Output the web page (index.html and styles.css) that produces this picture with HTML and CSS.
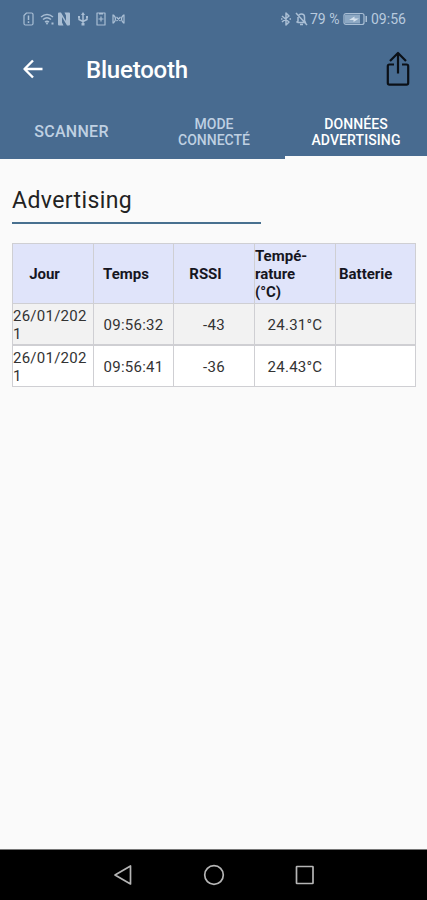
FILE: index.html
```
<!DOCTYPE html>
<html lang="fr">

<head>
    <meta charset="UTF-8" />
    <meta name="viewport" content="width=device-width, initial-scale=1.0">
    <title>Bluetooth</title>
    <link rel="stylesheet" href="styles.css">
</head>

<body>
    <header class="header">
        <div class="status">
            <div class="status-left">
                <svg width="11" height="14" viewBox="0 0 11 14"><path d="M3.500 1H8.500Q10 1 10 2.500V11.500Q10 13 8.500 13H2.500Q1 13 1 11.500V3.500Z" /><path class="medium" d="M5.500 3.500V8M5.500 9.300V11" /></svg>
                <svg width="14" height="14" viewBox="0 0 14 14"><path class="medium" d="M1 5Q7 0 13 5M3 7.500Q7 4 11 7.500M5 10Q7 8.500 9 10" /><path class="solid" d="M5.500 10.500H8.500L7 13ZM11.500 10.500H13.500V12.500H11.500Z" /></svg>
                <svg width="14" height="14" viewBox="0 0 14 14"><path class="solid" d="M1 1.500Q1 0.500 2 0.500H4L9 9V3.500L7.500 0.500H12Q13 0.500 13 1.500V12.500Q13 13.500 12 13.500H10L5 5V10.500L6.500 13.500H2Q1 13.500 1 12.500Z" /></svg>
                <svg width="12" height="14" viewBox="0 0 12 14"><path class="medium" d="M6 2V12M2 5V7.500L6 9.500L10 7.500V5" /><path class="solid" d="M4 3L6 0L8 3ZM1 4H3V6H1ZM9 4H11V6H9ZM4.500 11H7.500V13.500H4.500Z" /></svg>
                <svg class="saver" width="10" height="14" viewBox="0 0 10 14"><path d="M1 1H9V13H1ZM2.500 7H7.500M5 4.500V9.500M3 2H7" /></svg>
                <svg width="13" height="14" viewBox="0 0 13 14"><path d="M1 2.500V11.500M12 2.500V11.500M1.500 3Q5.500 7 1.500 11M11.500 3Q7.500 7 11.500 11M4.500 5L8.500 9M8.500 5L4.500 9" /></svg>
            </div>
            <div class="status-right">
                <svg width="10" height="14" viewBox="0 0 10 14"><path class="medium" d="M1 4L8 10L5 13V1L8 4L1 10" /><path class="solid" d="M0 6.300H1.500V7.700H0ZM8.500 6.300H10V7.700H8.500Z" /></svg>
                <svg class="bell" width="13" height="14" viewBox="0 0 13 14"><path class="medium" d="M1 1L12 13M2.500 10.500H10.500L9.500 8.500V5Q9.500 2 6.500 2Q5 2 4 3M3 5V9L1.500 10.500M5 12.500H8" /></svg>
                <span class="percent">79 %</span>
                <svg class="battery" width="25" height="14" viewBox="0 0 25 14"><rect x="1" y="1.500" width="20" height="11" rx="2" /><rect class="charge" x="2" y="2.500" width="15" height="9" /><path class="bolt" d="M6 8L11.500 4.500V6.500H16L10.500 10V8Z" /><path class="solid" d="M22.500 4H24V10H22.500Z" /></svg>
                <span class="clock">09:56</span>
            </div>
        </div>

        <div class="toolbar">
            <svg class="back" width="22" height="22" viewBox="0 0 22 22"><path d="M20.500 11H3M11 2.500L2.500 11L11 19.500" /></svg>
            <h1>Bluetooth</h1>
            <svg class="share" width="26" height="36" viewBox="0 0 26 36"><path d="M9 13.500H4.500Q2.800 13.500 2.800 15.200V32Q2.800 33.700 4.500 33.700H21.500Q23.200 33.700 23.200 32V15.200Q23.200 13.500 21.500 13.500H17M13 22.500V2.500M5 10L13 2L21 10" /></svg>
        </div>

        <nav class="tabs">
            <div class="tab tab-large"><span>SCANNER</span></div>
            <div class="tab"><span>MODE<br />CONNECTÉ</span></div>
            <div class="tab active"><span>DONNÉES<br />ADVERTISING</span></div>
        </nav>
    </header>

    <main class="content">
        <h2>Advertising</h2>

        <div class="table">
            <div class="row head">
                <div class="cell jour">Jour</div>
                <div class="cell temps">Temps</div>
                <div class="cell rssi">RSSI</div>
                <div class="cell temperature">Tempé-<br />rature<br />(°C)</div>
                <div class="cell batterie">Batterie</div>
            </div>
            <div class="row odd">
                <div class="cell date">26/01/202<br />1</div>
                <div class="cell">09:56:32</div>
                <div class="cell">-43</div>
                <div class="cell">24.31°C</div>
                <div class="cell"></div>
            </div>
            <div class="row">
                <div class="cell date">26/01/202<br />1</div>
                <div class="cell">09:56:41</div>
                <div class="cell">-36</div>
                <div class="cell">24.43°C</div>
                <div class="cell"></div>
            </div>
        </div>
    </main>

    <footer class="navbar">
        <svg width="22" height="22" viewBox="0 0 22 22"><path d="M18.500 2V20L3 11Z" /></svg>
        <svg width="22" height="22" viewBox="0 0 22 22"><circle cx="11" cy="11" r="9.300" /></svg>
        <svg width="22" height="22" viewBox="0 0 22 22"><rect x="2.500" y="2.500" width="16.500" height="17" rx="0.500" /></svg>
    </footer>
</body>

</html>
```

FILE: styles.css
```
* {
    box-sizing: border-box;
}

body {
    display: flex;
    flex-direction: column;
    height: 900px;
    margin: 0;
    background-color: #fafafa;
    color: #222;
    font-family: Roboto, "Liberation Sans", sans-serif;
}

svg {
    display: block;
    flex: none;
    fill: none;
    stroke-linejoin: round;
}

.header {
    height: 159px;
    background-color: #486b90;
    color: #fff;
}

/* Status bar */
.status {
    display: flex;
    justify-content: space-between;
    height: 37px;
    padding: 0 20px 0 23px;
    color: #b8cade;
    font-size: 14px;
}

.status svg {
    stroke: #a9bed4;
    stroke-width: 1.2;
}

.status .solid {
    fill: #a9bed4;
    stroke: none;
}

.status .medium {
    stroke-width: 1.5;
}

.status .charge {
    fill: #8ea9c4;
    stroke: none;
}

.status .bolt {
    fill: #d5e1ed;
    stroke: none;
}

.status-left,
.status-right {
    display: flex;
    align-items: center;
}

.status-left {
    gap: 6px;
}

.status-left svg:nth-child(2) {
    margin-right: -3px;
}

.status-left .saver {
    margin-left: 1px;
}

.bell {
    margin-left: 4px;
}

.percent {
    width: 31px;
    margin-left: 2px;
    white-space: nowrap;
}

.battery {
    margin-left: 2px;
}

.clock {
    width: 36px;
    margin-left: 3px;
}

/* Title bar */
.toolbar {
    display: flex;
    align-items: center;
    height: 64px;
    padding: 0 16px 0 22px;
}

.back {
    stroke: #fff;
    stroke-width: 2.4;
}

.toolbar h1 {
    flex: 1;
    margin: 2px 0 0 42px;
    font-size: 24px;
    font-weight: 500;
    letter-spacing: -0.2px;
}

.share {
    stroke: #0b1017;
    stroke-width: 2.2;
}

/* Tabs */
.tabs {
    display: grid;
    grid-template-columns: 143px 142px 142px;
    height: 58px;
}

.tab {
    display: flex;
    align-items: center;
    justify-content: center;
    padding-top: 6px;
    border-bottom: 3px solid transparent;
    color: #bfd0e2;
    font-size: 14px;
    font-weight: 500;
    line-height: 16px;
    text-align: center;
}

.tab-large {
    padding-top: 7px;
    font-size: 16px;
    letter-spacing: 0.3px;
}

.tab.active {
    border-bottom-color: #fafafa;
    color: #fff;
    letter-spacing: 0.1px;
}

/* Content */
.content {
    flex: 1;
    padding: 24px 11px 0 12px;
}

.content h2 {
    width: 249px;
    height: 41px;
    margin: 0 0 19px;
    border-bottom: 2px solid #48708f;
    font-size: 23px;
    font-weight: 400;
    letter-spacing: 0.4px;
    line-height: 36px;
}

.table {
    border: 1px solid #cfcfd3;
    border-width: 1px 0 0 1px;
}

.row {
    display: grid;
    grid-template-columns: 81px 80px 81px 81px 80px;
    height: 41px;
    background-color: #fff;
    color: #333;
    font-size: 15px;
    letter-spacing: 0.25px;
    line-height: 18px;
}

.row.odd {
    height: 42px;
    background-color: #f2f2f2;
}

.row.head {
    height: 60px;
    background-color: #e0e4fa;
    color: #16161f;
    font-weight: 700;
    letter-spacing: 0;
}

.cell {
    display: flex;
    align-items: center;
    justify-content: center;
    padding-top: 1px;
    border-right: 1px solid #cfcfd3;
    border-bottom: 1px solid #cfcfd3;
}

.row.odd .cell {
    border-bottom-width: 2px;
}

.cell.date {
    justify-content: flex-start;
    padding-top: 2px;
}

.jour {
    padding-right: 17px;
}

.temps {
    padding-right: 15px;
}

.rssi {
    padding-right: 17px;
}

.temperature,
.batterie {
    justify-content: flex-start;
}

.batterie {
    padding-left: 3px;
}

/* Android navigation keys */
.navbar {
    display: flex;
    align-items: center;
    justify-content: center;
    gap: 69px;
    height: 51px;
    padding-bottom: 1px;
    border-top: 1px solid #777;
    background-color: #000;
}

.navbar svg {
    stroke: #b5b5b5;
    stroke-width: 1.7;
}
```
